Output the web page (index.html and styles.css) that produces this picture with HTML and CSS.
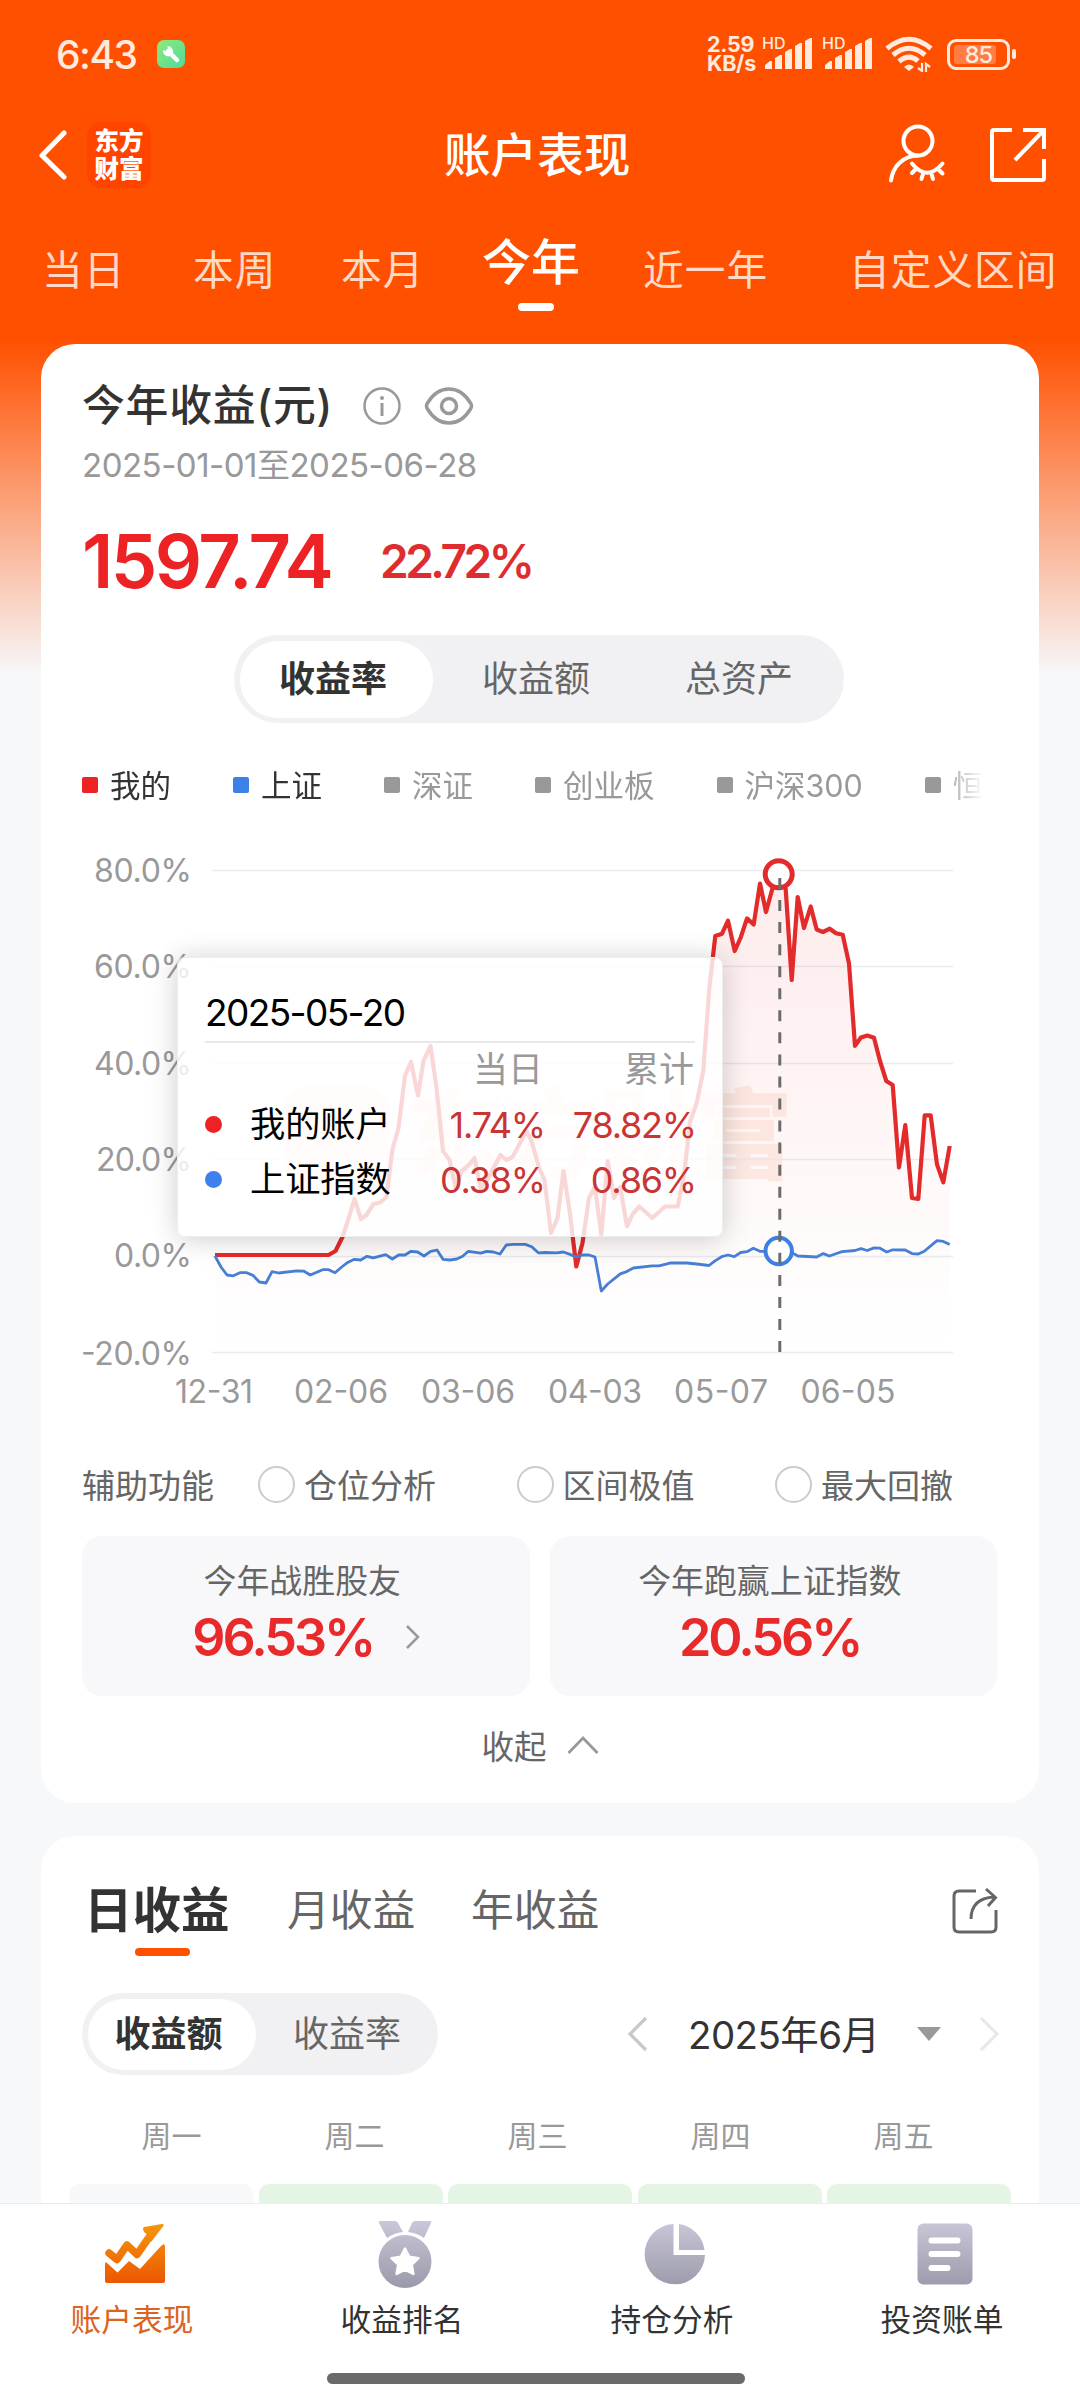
FILE: index.html
```html
<!DOCTYPE html>
<html lang="zh-CN">
<head>
    <meta charset="UTF-8">
    <meta name="viewport" content="width=device-width, initial-scale=1.0">
    <title>账户表现</title>
    <link rel="stylesheet" href="styles.css">
</head>
<body>

    <div class="status-bar">
        <span class="clock">6:43</span>
        <svg class="tool-icon" width="28" height="28" viewBox="0 0 28 28">
            <defs>
                <linearGradient id="green" x1="0" y1="0" x2="1" y2="1">
                    <stop offset="0" stop-color="#8fe87c"/>
                    <stop offset="1" stop-color="#4fdc98"/>
                </linearGradient>
            </defs>
            <rect width="28" height="28" rx="7" fill="url(#green)"/>
            <path d="M11 11l9 9" stroke="#fff" stroke-width="4.5" stroke-linecap="round"/>
            <path d="M10 6.500a5 5 0 1 1-3.600 3.200l3 2 2.400-2.200z" fill="#fff"/>
        </svg>
        <div class="status-right">
            <div class="speed"><span>2.59</span><span>KB/s</span></div>
            <div class="signal">
                <span class="hd">HD</span>
                <svg width="50" height="32" viewBox="0 0 50 32">
                    <path d="M1 31v-4l5-4h2v8zM11 31V20l5-3h2v14zM21 31V14l5-3h2v20zM31 31V8l5-3h2v26zM41 31V3l5-3h2v31z" fill="#ffeadf"/>
                </svg>
            </div>
            <div class="signal">
                <span class="hd">HD</span>
                <svg width="50" height="32" viewBox="0 0 50 32">
                    <path d="M1 31v-4l5-4h2v8zM11 31V20l5-3h2v14zM21 31V14l5-3h2v20zM31 31V8l5-3h2v26zM41 31V3l5-3h2v31z" fill="#ffeadf"/>
                </svg>
            </div>
            <svg class="wifi" width="48" height="36" viewBox="0 0 48 36">
                <g fill="none" stroke="#ffeadf" stroke-width="5">
                    <path d="M2 12.500Q24-6 46 12.500"/>
                    <path d="M8 19Q24 5.500 40 19"/>
                    <path d="M14 25.500Q24 17 33 25"/>
                </g>
                <path d="M24 35l-5-4q5-5 10 0z" fill="#ffeadf"/>
                <path d="M37 27v8l-4-3M41 36v-8l4 3" fill="none" stroke="#ffeadf" stroke-width="2.200"/>
            </svg>
            <div class="battery"><div class="battery-level"></div><span>85</span></div>
            <div class="battery-cap"></div>
        </div>
    </div>

    <div class="title-bar">
        <svg class="back" width="32" height="50" viewBox="0 0 32 50">
            <path d="M27 3L5 25.500 27 47" fill="none" stroke="#fff" stroke-width="5" stroke-linecap="round" stroke-linejoin="round"/>
        </svg>
        <div class="brand"><span>东方</span><span>财富</span></div>
        <h1>账户表现</h1>
        <svg class="user-icon" width="60" height="62" viewBox="0 0 60 62">
            <g fill="none" stroke="#fff" stroke-width="4" stroke-linecap="round">
                <circle cx="31" cy="18" r="14.500"/>
                <path d="M4 57.500C6 43 16 33 31 32.500"/>
                <path d="M25 40.500Q40 59 55.500 40.500M28.500 46.500l-3.500 3.500M36 51l-1.500 5M44.500 51l1.500 5M51.500 46.500l4 4"/>
            </g>
        </svg>
        <svg class="share-icon" width="58" height="58" viewBox="0 0 58 58">
            <path d="M23 4H5Q3 4 3 6v46q0 2 2 2h48q2 0 2-2V33M34 4h21v19M55 4L26 34" fill="none" stroke="#fff" stroke-width="4"/>
        </svg>
    </div>

    <div class="period-tabs">
        <span>当日</span>
        <span>本周</span>
        <span>本月</span>
        <span class="period-active">今年</span>
        <span>近一年</span>
        <span>自定义区间</span>
    </div>

    <div class="content">
        <div class="card">
            <div class="income-title">
                <h2>今年收益(元)</h2>
                <svg class="info" width="38" height="38" viewBox="0 0 38 38">
                    <circle cx="19" cy="19" r="17.500" fill="none" stroke="#999" stroke-width="2.500"/>
                    <path d="M19 16v13" stroke="#999" stroke-width="3"/>
                    <circle cx="19" cy="11" r="2" fill="#999"/>
                </svg>
                <svg class="eye" width="50" height="38" viewBox="0 0 50 38">
                    <path d="M3.500 16Q12 2 25 2t21.500 14q2 3 0 6Q38 36 25 36T3.500 22q-2-3 0-6z" fill="none" stroke="#999" stroke-width="3.500"/>
                    <circle cx="25" cy="19" r="7.500" fill="none" stroke="#999" stroke-width="3.500"/>
                </svg>
            </div>
            <p class="date-range">2025-01-01至2025-06-28</p>
            <div class="income-value">
                <span class="amount">1597.74</span>
                <span class="rate">22.72%</span>
            </div>

            <div class="segment">
                <span class="segment-on">收益率</span>
                <span>收益额</span>
                <span>总资产</span>
            </div>

            <div class="legend">
                <span class="legend-item mine">我的</span>
                <span class="legend-item sh">上证</span>
                <span class="legend-item">深证</span>
                <span class="legend-item">创业板</span>
                <span class="legend-item">沪深300</span>
                <span class="legend-item">恒生</span>
            </div>

            <div class="chart">
                <svg width="916" height="580" viewBox="82 840 916 580">
                    <defs>
                        <linearGradient id="area" gradientUnits="userSpaceOnUse" x1="0" y1="870" x2="0" y2="1352">
                            <stop offset="0" stop-color="#ed2224" stop-opacity=".09"/>
                            <stop offset="1" stop-color="#ed2224" stop-opacity="0"/>
                        </linearGradient>
                    </defs>
                    <!-- watermark -->
                    <rect x="284" y="1086" width="105" height="105" rx="24" fill="#fdefea"/>
                    <text class="watermark" x="407" y="1171" textLength="386">东方财富</text>
                    <!-- grid -->
                    <path d="M212 870.500H953M212 966.500H953M212 1063.500H953M212 1159.500H953M212 1256.500H953M212 1352.500H953" stroke="#e9ecf1" stroke-width="1.500"/>
                    <g class="axis" text-anchor="end">
                        <text x="192" y="882" textLength="98">80.0%</text>
                        <text x="192" y="978" textLength="98">60.0%</text>
                        <text x="192" y="1075" textLength="98">40.0%</text>
                        <text x="192" y="1171" textLength="96">20.0%</text>
                        <text x="192" y="1267" textLength="78">0.0%</text>
                        <text x="192" y="1365" textLength="111">-20.0%</text>
                    </g>
                    <g class="axis" text-anchor="middle">
                        <text x="214" y="1403" textLength="78">12-31</text>
                        <text x="341" y="1403" textLength="94">02-06</text>
                        <text x="468" y="1403" textLength="94">03-06</text>
                        <text x="595" y="1403" textLength="94">04-03</text>
                        <text x="721" y="1403" textLength="94">05-07</text>
                        <text x="848" y="1403" textLength="95">06-05</text>
                    </g>
                    <!-- my account -->
                    <path fill="url(#area)" d="M215 1352V1255H328.500L335.500 1251 342.500 1237 347.500 1222 354.500 1199 361 1219 366.500 1215 373.500 1204 380 1202.500 386.500 1197 392.500 1149 398.500 1128 405 1075.500 411 1062 418 1095.500 423.500 1061 430.500 1046 436.500 1088 443 1151 449.500 1160 455.500 1187 461.500 1171 468.500 1165.500 474.500 1158 480.500 1188 486.500 1181.500 493.500 1168 500.500 1155 506.500 1160 512.500 1157 520 1143 526.500 1131 531.500 1141 539 1167.500 544.500 1180 551 1233 557.500 1218 563.500 1171 570 1214 576.300 1266.500 582.500 1243 589 1198 595 1187 601.300 1235 607.700 1161 614 1198 620.300 1187 627 1226.500 632.700 1214 639.300 1206.500 652.300 1218 665 1206.500 677.700 1206.500 684 1176 690 1122 696.700 1103 703.300 1070.700 709.300 988.400 715.300 936 722 933.700 728 920.600 734.700 951 740.700 937.500 747 918.400 753.700 924.500 760 883.500 766 912 772.300 889 779 874.700 785.700 889 791.700 980 797.700 897 804 928 810.700 906.500 816.700 929.500 823 932 829.700 928.700 836 933.300 842.700 934.800 849 963.500 855 1045.800 861 1037.400 867.300 1035.500 874 1037.800 880 1061 886.300 1081 892.700 1085 899 1167.500 905.300 1125 912 1198 918.300 1199 924.700 1115.400 930.700 1115.400 937 1164.400 943.300 1182.400 949.700 1146V1352z"/>
                    <polyline class="line-mine" points="215,1255 328.500,1255 335.500,1251 342.500,1237 347.500,1222 354.500,1199 361,1219 366.500,1215 373.500,1204 380,1202.500 386.500,1197 392.500,1149 398.500,1128 405,1075.500 411,1062 418,1095.500 423.500,1061 430.500,1046 436.500,1088 443,1151 449.500,1160 455.500,1187 461.500,1171 468.500,1165.500 474.500,1158 480.500,1188 486.500,1181.500 493.500,1168 500.500,1155 506.500,1160 512.500,1157 520,1143 526.500,1131 531.500,1141 539,1167.500 544.500,1180 551,1233 557.500,1218 563.500,1171 570,1214 576.300,1266.500 582.500,1243 589,1198 595,1187 601.300,1235 607.700,1161 614,1198 620.300,1187 627,1226.500 632.700,1214 639.300,1206.500 652.300,1218 665,1206.500 677.700,1206.500 684,1176 690,1122 696.700,1103 703.300,1070.700 709.300,988.400 715.300,936 722,933.700 728,920.600 734.700,951 740.700,937.500 747,918.400 753.700,924.500 760,883.500 766,912 772.300,889 779,874.700 785.700,889 791.700,980 797.700,897 804,928 810.700,906.500 816.700,929.500 823,932 829.700,928.700 836,933.300 842.700,934.800 849,963.500 855,1045.800 861,1037.400 867.300,1035.500 874,1037.800 880,1061 886.300,1081 892.700,1085 899,1167.500 905.300,1125 912,1198 918.300,1199 924.700,1115.400 930.700,1115.400 937,1164.400 943.300,1182.400 949.700,1146"/>
                    <!-- shanghai index -->
                    <polyline class="line-sh" points="215,1256 221,1267 227,1275 233.300,1275.800 240,1272.700 246.700,1272.700 253,1275.400 259.300,1282 266,1283 272,1271.600 278.700,1273 296.700,1270.800 304,1271.200 310.300,1275 322.700,1269.700 328.700,1269.700 335,1272.700 341.700,1267 347.700,1262.400 354.300,1259.300 360.700,1260 367,1256.300 373.300,1257.800 385.700,1254.700 392.300,1259 398.700,1255 405,1255 411,1251.300 417.700,1252 424,1256 430.700,1251.300 437,1250 443,1259.300 450,1260 456.700,1259 462.700,1256.300 468.300,1251.300 480.700,1253.200 486.700,1251.300 493.300,1252 500,1254 506.300,1245 512.700,1244.400 525.300,1244.400 531.700,1246.700 538.300,1252.800 545,1252.500 556.700,1252.800 563.300,1252 570,1254.400 576,1257 582.700,1255 589,1255 595,1257 601.300,1291 607.700,1284 620.300,1273.900 626.700,1271.600 633.300,1268 652.300,1265.800 659,1265.800 671,1262.800 686.700,1263 696.700,1264 709,1265.500 715,1260.900 721.700,1256.700 728,1255 734.300,1256.700 740.700,1252.500 747,1251.700 753.300,1248.200 760,1251.300 778.700,1251.300 793.300,1253.600 798,1256 816.700,1257 823.300,1253.600 829.300,1256 842,1251.700 855,1250.500 861,1248.600 867.300,1250.500 874,1247.900 880,1248.200 886.700,1252 892.700,1249.800 905.300,1250 912,1253.600 918.300,1254 924.300,1251.300 937,1240.600 943.300,1241.400 949.700,1244.400"/>
                    <circle cx="778.700" cy="874.300" r="13.500" fill="#fff" stroke="#e32b2b" stroke-width="5"/>
                    <circle cx="778.700" cy="1251" r="13.200" fill="#fff" stroke="#3d80e0" stroke-width="4"/>
                    <path d="M779.800 878V1352" stroke="#6c6c6c" stroke-width="3" stroke-dasharray="11 11.050"/>
                </svg>

                <div class="tooltip">
                    <p class="tip-date">2025-05-20</p>
                    <div class="tip-row tip-head"><span></span><span></span><span>当日</span><span>累计</span></div>
                    <div class="tip-row"><i class="dot dot-red"></i><span>我的账户</span><b>1.74%</b><b>78.82%</b></div>
                    <div class="tip-row"><i class="dot dot-blue"></i><span>上证指数</span><b>0.38%</b><b>0.86%</b></div>
                </div>
            </div>

            <div class="assist">
                <span class="assist-name">辅助功能</span>
                <span class="option">仓位分析</span>
                <span class="option">区间极值</span>
                <span class="option">最大回撤</span>
            </div>

            <div class="beat">
                <div class="beat-box">
                    <p>今年战胜股友</p>
                    <div class="beat-value beat-link">
                        <span>96.53%</span>
                        <svg width="16" height="26" viewBox="0 0 16 26">
                            <path d="M2 2l11 11L2 24" fill="none" stroke="#999" stroke-width="2.500"/>
                        </svg>
                    </div>
                </div>
                <div class="beat-box">
                    <p>今年跑赢上证指数</p>
                    <div class="beat-value"><span>20.56%</span></div>
                </div>
            </div>

            <div class="fold">
                <span>收起</span>
                <svg width="32" height="20" viewBox="0 0 32 20">
                    <path d="M1.500 18L16 3l14.500 15" fill="none" stroke="#999" stroke-width="2.800"/>
                </svg>
            </div>
        </div>

        <div class="card card-daily">
            <div class="daily-tabs">
                <span class="daily-active">日收益</span>
                <span>月收益</span>
                <span>年收益</span>
                <svg width="48" height="48" viewBox="0 0 48 48">
                    <path d="M25 4H8Q3 4 3 9v31q0 5 5 5h32q5 0 5-5V23" fill="none" stroke="#666" stroke-width="3"/>
                    <path d="M20 32C20 19 27 11 43 10M35 2l9.500 8.500L37 19" fill="none" stroke="#666" stroke-width="3"/>
                </svg>
            </div>

            <div class="daily-bar">
                <div class="segment segment-small">
                    <span class="segment-on">收益额</span>
                    <span>收益率</span>
                </div>
                <div class="month">
                    <svg width="22" height="36" viewBox="0 0 22 36">
                        <path d="M19 2L3 18l16 16" fill="none" stroke="#c8c8c8" stroke-width="3.200"/>
                    </svg>
                    <span>2025年6月</span>
                    <i class="arrow-down"></i>
                    <svg width="22" height="36" viewBox="0 0 22 36">
                        <path d="M3 2l16 16L3 34" fill="none" stroke="#e9e9e9" stroke-width="3.200"/>
                    </svg>
                </div>
            </div>

            <div class="weekdays">
                <span>周一</span><span>周二</span><span>周三</span><span>周四</span><span>周五</span>
            </div>
            <div class="days">
                <div class="day day-empty"></div>
                <div class="day"></div>
                <div class="day"></div>
                <div class="day"></div>
                <div class="day"></div>
            </div>
        </div>
    </div>

    <div class="bottom-nav">
        <svg width="0" height="0" class="defs">
            <defs>
                <linearGradient id="orange" x1="0" y1="0" x2="0" y2="64" gradientUnits="userSpaceOnUse">
                    <stop offset="0" stop-color="#f89a08"/>
                    <stop offset="1" stop-color="#ea5504"/>
                </linearGradient>
                <linearGradient id="gray" x1="0" y1="0" x2="0" y2="66" gradientUnits="userSpaceOnUse">
                    <stop offset="0" stop-color="#c9c7d8"/>
                    <stop offset="1" stop-color="#9b9aaa"/>
                </linearGradient>
            </defs>
        </svg>
        <div class="nav-item nav-active">
            <svg width="64" height="68" viewBox="0 0 64 68">
                <path d="M2 43q0-3 2-1l10.500 9.500L26 40l11 8L58 25q4-4 4 1v34q0 2-2 2H4q-2 0-2-2z" fill="url(#orange)"/>
                <path d="M6 32l8 6.500L24 24l10 9.500L49 12" fill="none" stroke="url(#orange)" stroke-width="7.500" stroke-linecap="round" stroke-linejoin="round"/>
                <path d="M41 6l18-3q3 0 1 2.500L48 21l-3-7-4-3q-2-4 0-5z" fill="url(#orange)"/>
            </svg>
            <span>账户表现</span>
        </div>
        <div class="nav-item">
            <svg width="64" height="68" viewBox="0 0 64 68">
                <path d="M7 0h15q2 0 3 2l5 9q-9 1-16 6L6 2Q5 0 7 0zM57 0H42q-2 0-3 2l-4 9q9 1 16 6l7-15q1-2-1-2z" fill="url(#gray)"/>
                <circle cx="32" cy="40.500" r="26.500" fill="url(#gray)"/>
                <path d="M32 27.500l4.200 8.300 9.300 1.400-6.700 6.500 1.600 9.300L32 48.700l-8.400 4.300 1.600-9.300-6.700-6.500 9.300-1.400z" fill="#fff" stroke="#fff" stroke-width="2.500" stroke-linejoin="round"/>
            </svg>
            <span>收益排名</span>
        </div>
        <div class="nav-item">
            <svg width="64" height="68" viewBox="0 0 64 68">
                <path d="M30.500 3A30.200 30.200 0 1 0 62 34H30.500z" fill="url(#gray)"/>
                <path d="M36 3v26h25.500A30 30 0 0 0 36 3z" fill="url(#gray)"/>
            </svg>
            <span>持仓分析</span>
        </div>
        <div class="nav-item">
            <svg width="64" height="68" viewBox="0 0 64 68">
                <rect x="4.500" y="2.500" width="55" height="61" rx="6" fill="url(#gray)"/>
                <path d="M18.500 19.500h26M18.500 33h26M18.500 47h16" stroke="#fff" stroke-width="6" stroke-linecap="round"/>
            </svg>
            <span>投资账单</span>
        </div>
    </div>
    <div class="home-area"><div class="home-bar"></div></div>

</body>
</html>
```

FILE: styles.css
```css
*{
    box-sizing: border-box;
}
body{
    margin: 0;
    width: 1080px;
    height: 2400px;
    overflow: hidden;
    display: flex;
    flex-direction: column;
    background: linear-gradient(#ff5000 340px, #f7f8fa 675px);
    font-family: Inter, "Noto Sans CJK SC", sans-serif;
    color: #333;
}
h1, h2, p{
    margin: 0;
    font-weight: 500;
}
svg{
    display: block;
    flex: none;
}
span{
    white-space: nowrap;
}

/* status bar */
.status-bar{
    height: 108px;
    padding: 0 64px 0 56px;
    display: flex;
    align-items: center;
    color: #ffeadf;
    flex: none;
}
.clock{
    width: 101px;
    font-size: 39px;
    font-weight: 500;
    letter-spacing: -1.5px;
}
.status-right{
    margin-left: auto;
    display: flex;
    align-items: center;
}
.speed{
    width: 56px;
    display: flex;
    flex-direction: column;
    font-size: 21.5px;
    font-weight: 700;
    line-height: 19px;
    letter-spacing: -0.3px;
}
.signal{
    position: relative;
    width: 60px;
    padding-left: 1px;
}
.hd{
    position: absolute;
    left: -1px;
    top: -3px;
    font-size: 16px;
    font-weight: 500;
    line-height: 16px;
}
.wifi{
    margin: 0 14px 0 2px;
}
.battery{
    position: relative;
    width: 63px;
    height: 31px;
    border: 3px solid #ffeadf;
    border-radius: 9px;
    font-size: 23.5px;
    font-weight: 500;
    line-height: 26px;
    text-align: center;
    letter-spacing: -1px;
}
.battery span{
    position: relative;
}
.battery-level{
    position: absolute;
    left: 4px;
    top: 3px;
    width: 42px;
    height: 19px;
    border-radius: 3px;
    background: #ff7d42;
}
.battery-cap{
    width: 4px;
    height: 10px;
    margin-left: 2px;
    border-radius: 2px;
    background: #ffeadf;
}

/* title bar */
.title-bar{
    height: 94px;
    padding: 0 32px 0 37px;
    display: flex;
    align-items: center;
    color: #fff;
    flex: none;
}
.brand{
    width: 64px;
    height: 66px;
    margin-left: 18px;
    border-radius: 14px;
    background: #ff4400;
    display: flex;
    flex-direction: column;
    align-items: center;
    justify-content: center;
    padding-bottom: 2px;
    font-family: "Noto Sans CJK SC", sans-serif;
    font-size: 24.5px;
    font-weight: 900;
    line-height: 28px;
}
h1{
    width: 190px;
    margin-left: 293px;
    font-size: 46.6px;
    line-height: 60px;
    white-space: nowrap;
}
.user-icon{
    margin: 0 0 2px 253px;
}
.share-icon{
    margin-left: auto;
    margin-right: 1px;
}

.period-tabs{
    height: 142px;
    padding-left: 42px;
    display: grid;
    grid-template-columns: 151px 148px 141px 161px 206px auto;
    color: #ffd9c6;
    font-size: 40.7px;
    letter-spacing: 1px;
    line-height: 137px;
    flex: none;
}
.period-active{
    position: relative;
    color: #fff;
    font-size: 49px;
    font-weight: 500;
    letter-spacing: 0;
    line-height: 122px;
}
.period-active::after{
    content: "";
    position: absolute;
    left: 36px;
    top: 101px;
    width: 36px;
    height: 8px;
    border-radius: 4px;
    background: #fff;
}

.content{
    flex: 1;
    min-height: 0;
    overflow: hidden;
    padding: 0 41px;
}
.card{
    height: 1459px;
    border-radius: 34px;
    background: #fff;
    padding: 32px 42px 0 41px;
}

.income-title{
    height: 60px;
    display: flex;
    align-items: center;
}
h2{
    width: 281px;
    font-size: 42.8px;
    line-height: 60px;
    letter-spacing: 0.8px;
    white-space: nowrap;
}
.eye{
    margin-left: 23px;
}
.date-range{
    font-size: 33px;
    font-weight: 400;
    line-height: 58px;
    letter-spacing: -0.5px;
    color: #999;
}
.income-value{
    height: 140px;
    padding-bottom: 6px;
    display: flex;
    align-items: center;
    color: #ed2224;
    white-space: nowrap;
}
.amount{
    width: 298px;
    font-size: 74px;
    font-weight: 600;
    letter-spacing: -2.5px;
}
.rate{
    font-size: 46px;
    font-weight: 600;
    letter-spacing: -3.5px;
    color: #de2d2f;
}

.segment{
    width: 610px;
    height: 88px;
    margin: 1px 0 0 152px;
    padding: 6px;
    border-radius: 44px;
    background: #f1f1f4;
    display: grid;
    grid-template-columns: 193px 206px 200px;
    text-align: center;
    font-size: 36px;
    line-height: 77px;
    color: #666;
}
.segment-on{
    padding-right: 7px;
    border-radius: 38px;
    background: #fff;
    color: #333;
    font-weight: 700;
}

.legend{
    width: 904px;
    height: 124px;
    padding-bottom: 2px;
    display: flex;
    align-items: center;
    gap: 62px;
    overflow: hidden;
    font-size: 30.5px;
    color: #999;
    -webkit-mask-image: linear-gradient(90deg, #000 860px, transparent 902px);
    mask-image: linear-gradient(90deg, #000 860px, transparent 902px);
}
.legend-item{
    flex: none;
    display: flex;
    align-items: center;
}
.legend-item::before{
    content: "";
    width: 16px;
    height: 16px;
    margin: 2px 12px 0 0;
    border-radius: 2px;
    background: #999;
}
.mine, .sh{
    color: #333;
}
.mine::before{
    background: #ed2224;
}
.sh::before{
    background: #3d80e8;
}

/* chart */
.chart{
    position: relative;
    height: 580px;
    margin-top: -7px;
}
.axis{
    font-size: 32px;
    fill: #999;
}
.watermark{
    font-family: "Noto Sans CJK SC", sans-serif;
    font-size: 98px;
    font-weight: 900;
    fill: #fdefe8;
}
.line-mine{
    fill: none;
    stroke: #e32b2b;
    stroke-width: 4.2;
    stroke-linejoin: round;
}
.line-sh{
    fill: none;
    stroke: #467fd5;
    stroke-width: 2.8;
    stroke-linejoin: round;
}
.tooltip{
    position: absolute;
    left: 95px;
    top: 117px;
    width: 546px;
    height: 280px;
    padding: 27px 27px 0;
    border-radius: 8px;
    border: 1px solid #eee;
    background: rgba(255, 255, 255, 0.81);
    box-shadow: 0 2px 28px rgba(0, 0, 0, 0.2);
    color: #000;
}
.tip-date{
    height: 58px;
    border-bottom: 2px solid #e8e8e8;
    font-size: 37px;
    font-weight: 400;
    line-height: 55px;
    letter-spacing: -1.6px;
}
.tip-row{
    height: 55px;
    display: grid;
    grid-template-columns: 45px 150px 145px 151px;
    align-items: center;
    font-size: 35.2px;
    line-height: 50px;
}
.tip-row span{
    margin-top: -2px;
}
.tip-row b{
    font-weight: 400;
    font-size: 36px;
    letter-spacing: -1.2px;
    text-align: right;
    color: #c93434;
}
.tip-head{
    height: 54px;
    color: #999;
    text-align: right;
    font-size: 35px;
}
.tip-head span{
    margin-right: 2px;
}
.dot{
    width: 17px;
    height: 17px;
    border-radius: 50%;
}
.dot-red{
    background: #ed2224;
}
.dot-blue{
    background: #3d80ee;
}

.assist{
    height: 70px;
    margin-top: 29px;
    display: flex;
    align-items: center;
    font-size: 33px;
    color: #666;
}
.assist-name{
    flex: none;
    width: 176px;
}
.option{
    flex: none;
    width: 258.5px;
    display: flex;
    align-items: center;
}
.option:last-child{
    width: auto;
}
.option::before{
    content: "";
    width: 33px;
    height: 33px;
    margin: 1px 9px 0 0;
    border: 2.5px solid #ccc;
    border-radius: 50%;
}

.beat{
    margin-top: 17px;
    display: flex;
    gap: 20px;
    text-align: center;
}
.beat-box{
    flex: 1;
    height: 160px;
    padding: 21px 7px 0 0;
    border-radius: 20px;
    background: #f8f8fa;
}
.beat-box p{
    font-size: 32.9px;
    font-weight: 400;
    line-height: 48px;
    color: #666;
}
.beat-value{
    height: 64px;
    display: flex;
    align-items: center;
    justify-content: center;
    gap: 32px;
    font-size: 52px;
    font-weight: 600;
    letter-spacing: -3px;
    color: #e82a2a;
}
.beat-link{
    padding-left: 9px;
}

.fold{
    height: 97px;
    padding-left: 1px;
    display: flex;
    align-items: center;
    justify-content: center;
    gap: 20px;
    font-size: 32.5px;
    color: #666;
}

/* daily income */
.card-daily{
    height: 600px;
    margin-top: 33px;
    padding-top: 40px;
}
.daily-tabs{
    height: 70px;
    display: flex;
    align-items: center;
    font-size: 42.8px;
    line-height: 62px;
    color: #666;
}
.daily-tabs span{
    width: 184px;
    margin-top: -1px;
}
.daily-tabs .daily-active{
    position: relative;
    width: 205px;
    padding-left: 2px;
    font-size: 48.5px;
    font-weight: 700;
    color: #333;
}
.daily-active::after{
    content: "";
    position: absolute;
    left: 53px;
    top: 68px;
    width: 55px;
    height: 8px;
    border-radius: 4px;
    background: #ff5000;
}
.daily-tabs svg{
    margin-left: auto;
    margin-right: -2px;
}
.daily-bar{
    margin-top: 47px;
    display: flex;
    align-items: center;
}
.segment-small{
    width: 356px;
    height: 82px;
    margin: 0;
    grid-template-columns: 168px 182px;
    line-height: 71px;
}
.month{
    margin-left: 189px;
    flex: 1;
    display: flex;
    align-items: center;
    font-size: 38.5px;
    letter-spacing: -0.6px;
}
.month span{
    width: 229px;
    margin: -4px 0 0 39px;
}
.arrow-down{
    width: 24px;
    height: 14px;
    margin: 0 37px 0 0;
    background: #999;
    clip-path: polygon(0 0, 100% 0, 50% 100%);
}
.weekdays{
    margin: 37px -2px 0;
    display: grid;
    grid-template-columns: repeat(5, 183px);
    text-align: center;
    font-size: 30px;
    line-height: 48px;
    color: #999;
}
.days{
    margin: 24px -14px 0 -13px;
    display: grid;
    grid-template-columns: repeat(5, 1fr);
    gap: 5.5px;
}
.day{
    height: 130px;
    border-radius: 10px;
    background: #e4f4e5;
}
.day-empty{
    background: #f7f8fa;
}

/* bottom navigation */
.bottom-nav{
    position: relative;
    height: 150px;
    flex: none;
    display: flex;
    border-top: 1px solid #ebebeb;
    background: #fff;
}
.defs{
    position: absolute;
}
.nav-item{
    width: 270px;
    padding-top: 17px;
    display: flex;
    flex-direction: column;
    align-items: center;
    font-size: 30.7px;
    line-height: 44px;
}
.nav-item span{
    margin: 9px 6px 0 0;
}
.nav-active{
    color: #db6420;
}
.home-area{
    height: 47px;
    flex: none;
    padding-top: 20px;
    background: #fff;
}
.home-bar{
    width: 418px;
    height: 11px;
    margin-left: 327px;
    border-radius: 6px;
    background: #6a6a6a;
}
```
